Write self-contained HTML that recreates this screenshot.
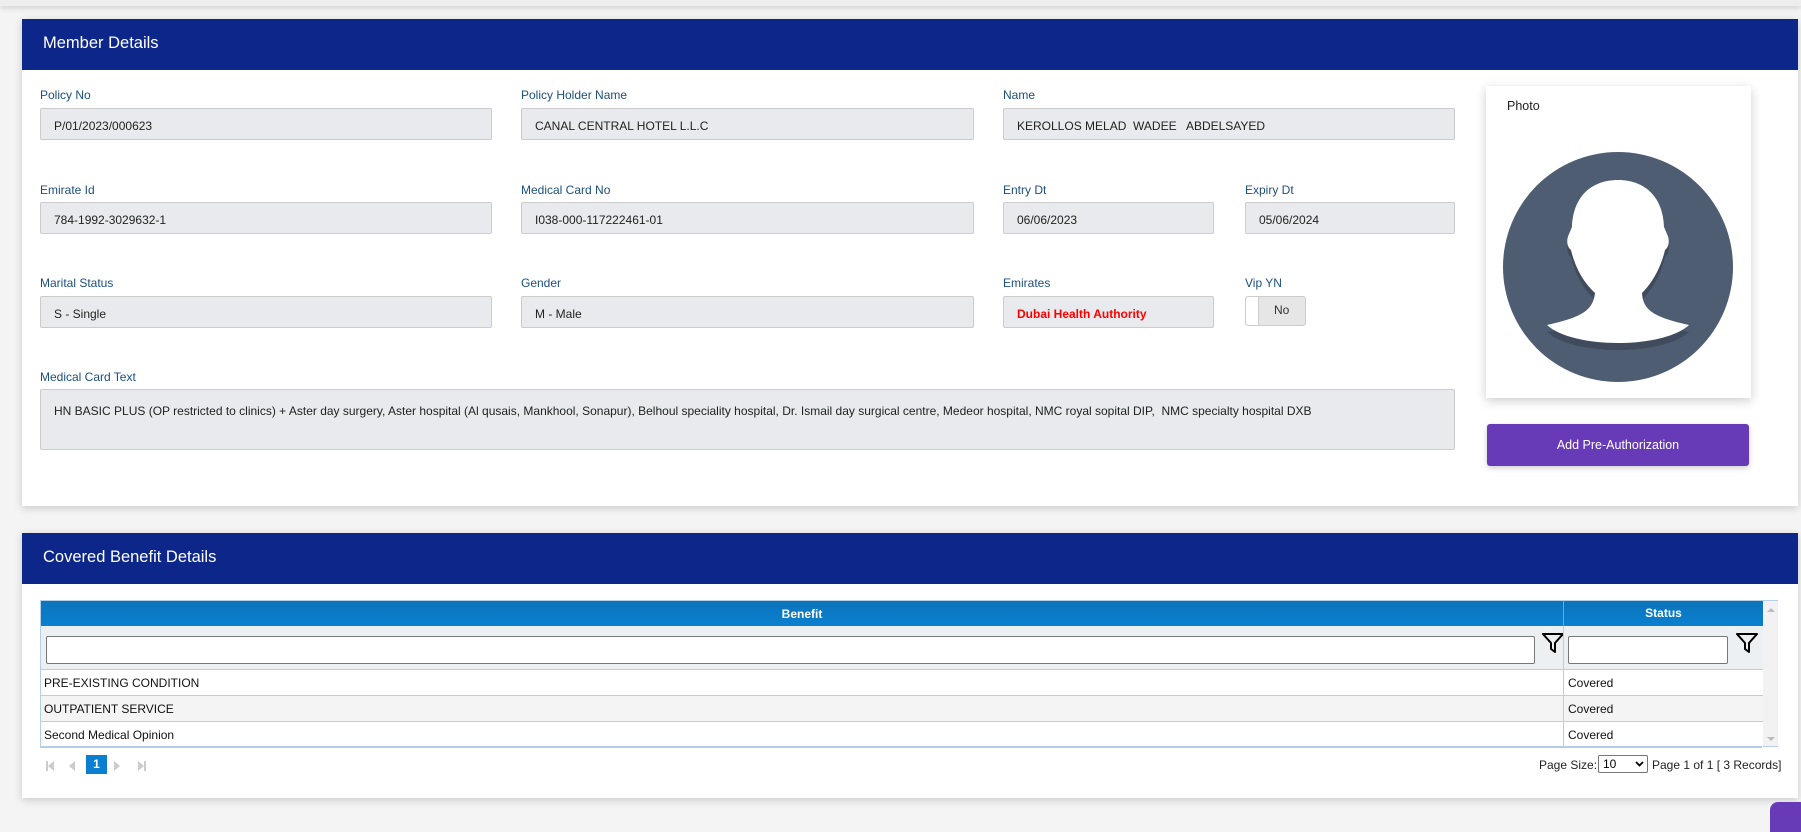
<!DOCTYPE html>
<html><head><meta charset="utf-8">
<style>
*{box-sizing:border-box;margin:0;padding:0}
body{width:1801px;height:818px;background:#f4f4f4;font-family:"Liberation Sans",Arial,sans-serif;position:relative;overflow:hidden}
.abs{position:absolute}
.card{position:absolute;background:#fff;box-shadow:0 2px 8px rgba(0,0,0,.18)}
.hdr{position:absolute;left:0;right:0;top:0;background:#0d2689;color:#fff;font-size:16.5px;padding-left:21px}
.lbl{position:absolute;font-size:12px;color:#1c4f7e}
.inp{position:absolute;height:32px;background:#e8eaed;border:1px solid #ccc;border-radius:2px;font-size:12px;color:#222;padding:10px 0 0 13px}
.grid{position:absolute;left:40px;top:600px;width:1738px;height:147px;border:1px solid #b3d0e8}
.row{position:absolute;left:0;width:1722px;height:26px;border-bottom:1px solid #b3d0e8;font-size:12px;color:#111}
.row span{position:absolute;top:6px}
</style></head><body>
<div class="abs" style="left:0;top:0;width:1801px;height:6px;background:#eee;box-shadow:0 2px 6px rgba(0,0,0,.15)"></div>

<div class="card" style="left:22px;top:19px;width:1776px;height:487px">
  <div class="hdr" style="height:51px;line-height:48px">Member Details</div>
</div>

<div class="lbl" style="left:40px;top:88px">Policy No</div>
<div class="inp" style="left:40px;top:108px;width:452px">P/01/2023/000623</div>
<div class="lbl" style="left:521px;top:88px">Policy Holder Name</div>
<div class="inp" style="left:521px;top:108px;width:453px">CANAL CENTRAL HOTEL L.L.C</div>
<div class="lbl" style="left:1003px;top:88px">Name</div>
<div class="inp" style="left:1003px;top:108px;width:452px">KEROLLOS MELAD&nbsp; WADEE &nbsp; ABDELSAYED</div>

<div class="lbl" style="left:40px;top:183px">Emirate Id</div>
<div class="inp" style="left:40px;top:202px;width:452px">784-1992-3029632-1</div>
<div class="lbl" style="left:521px;top:183px">Medical Card No</div>
<div class="inp" style="left:521px;top:202px;width:453px">I038-000-117222461-01</div>
<div class="lbl" style="left:1003px;top:183px">Entry Dt</div>
<div class="inp" style="left:1003px;top:202px;width:211px">06/06/2023</div>
<div class="lbl" style="left:1245px;top:183px">Expiry Dt</div>
<div class="inp" style="left:1245px;top:202px;width:210px">05/06/2024</div>

<div class="lbl" style="left:40px;top:276px">Marital Status</div>
<div class="inp" style="left:40px;top:296px;width:452px">S - Single</div>
<div class="lbl" style="left:521px;top:276px">Gender</div>
<div class="inp" style="left:521px;top:296px;width:453px">M - Male</div>
<div class="lbl" style="left:1003px;top:276px">Emirates</div>
<div class="inp" style="left:1003px;top:296px;width:211px;color:#f00;font-weight:bold">Dubai Health Authority</div>
<div class="lbl" style="left:1245px;top:276px">Vip YN</div>
<div class="abs" style="left:1245px;top:296px;width:61px;height:30px;background:#e6e6e6;border:1px solid #ccc;border-radius:3px;font-size:12px;color:#333">
  <div class="abs" style="left:0;top:0;width:13px;height:28px;background:#fff;border-right:1px solid #ccc;border-radius:3px 0 0 3px"></div>
  <div class="abs" style="left:28px;top:6px">No</div>
</div>

<div class="lbl" style="left:40px;top:370px">Medical Card Text</div>
<div class="inp" style="left:40px;top:389px;width:1415px;height:61px;padding-top:14px">HN BASIC PLUS (OP restricted to clinics) + Aster day surgery, Aster hospital (Al qusais, Mankhool, Sonapur), Belhoul speciality hospital, Dr. Ismail day surgical centre, Medeor hospital, NMC royal sopital DIP,&nbsp; NMC specialty hospital DXB</div>

<div class="card" style="left:1486px;top:86px;width:265px;height:312px;box-shadow:0 3px 10px rgba(0,0,0,.2)">
  <div class="abs" style="left:21px;top:13px;font-size:12.5px;color:#222">Photo</div>
  <svg class="abs" style="left:17px;top:66px" width="230" height="230" viewBox="0 0 230 230">
    <circle cx="115" cy="115" r="115" fill="#4e5d72"/>
    <path transform="translate(0,7)" fill="#404c5e" d="M115 28C88 28 70 45 69 75L66 82C63 88 64 95 68 98C72 115 80 130 92 141C90 158 80 165 44 173C70 197 160 197 186 173C150 165 140 158 139 141C150 130 158 115 162 98C166 95 167 88 164 82L161 75C160 45 142 28 115 28Z"/>
    <path fill="#fff" d="M115 28C88 28 70 45 69 75L66 82C63 88 64 95 68 98C72 115 80 130 92 141C90 158 80 165 44 173C70 197 160 197 186 173C150 165 140 158 139 141C150 130 158 115 162 98C166 95 167 88 164 82L161 75C160 45 142 28 115 28Z"/>
  </svg>
</div>
<div class="abs" style="left:1487px;top:424px;width:262px;height:42px;background:#673ab7;border-radius:3px;color:#fff;font-size:12.5px;text-align:center;line-height:42px;box-shadow:0 2px 6px rgba(0,0,0,.2)">Add Pre-Authorization</div>

<div class="card" style="left:22px;top:533px;width:1776px;height:265px">
  <div class="hdr" style="height:51px;line-height:48px">Covered Benefit Details</div>
</div>

<div class="grid">
  <div class="abs" style="left:0;top:0;width:1722px;height:25px;background:linear-gradient(#0c74bb,#0a80d0);color:#fff;font-size:12px;font-weight:bold">
    <div class="abs" style="left:0;width:1522px;text-align:center;top:6px">Benefit</div>
    <div class="abs" style="left:1522px;width:200px;text-align:center;border-left:1px solid #4ab0ff;height:25px;top:0;line-height:25px">Status</div>
  </div>
  <div class="abs" style="left:0;top:25px;width:1722px;height:44px;background:#edf0f3;border-bottom:1px solid #b3d0e8">
    <div class="abs" style="left:5px;top:10px;width:1489px;height:28px;background:#fff;border:1px solid #777;border-radius:2px"></div>
    <svg class="abs" style="left:1500px;top:6px" width="24" height="22" viewBox="0 0 24 22"><path d="M2 2H22L14 11V20L10 17V11Z" fill="none" stroke="#000" stroke-width="2" stroke-linejoin="round"/></svg>
    <div class="abs" style="left:1522px;top:0;width:1px;height:44px;background:#b3d0e8"></div>
    <div class="abs" style="left:1527px;top:10px;width:160px;height:28px;background:#fff;border:1px solid #777;border-radius:2px"></div>
    <svg class="abs" style="left:1694px;top:6px" width="24" height="22" viewBox="0 0 24 22"><path d="M2 2H22L14 11V20L10 17V11Z" fill="none" stroke="#000" stroke-width="2" stroke-linejoin="round"/></svg>
  </div>
  <div class="row" style="top:69px;background:#fff"><span style="left:3px">PRE-EXISTING CONDITION</span><span style="left:1527px">Covered</span></div>
  <div class="row" style="top:95px;background:#f4f4f4"><span style="left:3px">OUTPATIENT SERVICE</span><span style="left:1527px">Covered</span></div>
  <div class="row" style="top:121px;background:#fff;border-bottom:none"><span style="left:3px">Second Medical Opinion</span><span style="left:1527px">Covered</span></div>
  <div class="abs" style="left:1522px;top:69px;width:1px;height:78px;background:#b3d0e8"></div>
  <div class="abs" style="left:1722px;top:0;width:15px;height:145px;background:#f2f2f2"></div>
  <div class="abs" style="left:1726px;top:7px;border:4px solid transparent;border-bottom:4px solid #bbb;border-top:none"></div>
  <div class="abs" style="left:1726px;top:136px;border:4px solid transparent;border-top:4px solid #bbb;border-bottom:none"></div>
</div>
<div class="abs" style="left:40px;top:746px;width:1722px;height:2px;background:#b3d0e8"></div>

<svg class="abs" style="left:44px;top:757px" width="110" height="18" viewBox="0 0 110 18">
  <rect x="2" y="4" width="2" height="10" fill="#ccc"/><path d="M10 4L4 9L10 14Z" fill="#ccc"/>
  <path d="M31 4L25 9L31 14Z" fill="#ccc"/>
  <path d="M70 4L76 9L70 14Z" fill="#ccc"/>
  <path d="M94 4L100 9L94 14Z" fill="#ccc"/><rect x="100" y="4" width="2" height="10" fill="#ccc"/>
</svg>
<div class="abs" style="left:86px;top:755px;width:21px;height:19px;background:#0a7fd0;color:#fff;font-size:12px;font-weight:bold;text-align:center;line-height:19px">1</div>

<div class="abs" style="left:1539px;top:757px;font-size:12px;color:#222;line-height:16px">Page Size:</div>
<div class="abs" style="left:1598px;top:755px;width:50px;height:18px;border:1px solid #777;border-radius:2px;font-size:12px;padding-left:4px;line-height:16px;background:#fff">10
  <svg class="abs" style="left:36px;top:5px" width="9" height="6" viewBox="0 0 9 6"><path d="M1 1L4.5 4.5L8 1" stroke="#000" stroke-width="1.8" fill="none"/></svg>
</div>
<div class="abs" style="left:1652px;top:757px;font-size:12px;color:#222;line-height:16px">Page 1 of 1 [ 3 Records]</div>

<div class="abs" style="left:1770px;top:802px;width:40px;height:30px;background:#673ab7;border-radius:8px 0 0 0"></div>
</body></html>
